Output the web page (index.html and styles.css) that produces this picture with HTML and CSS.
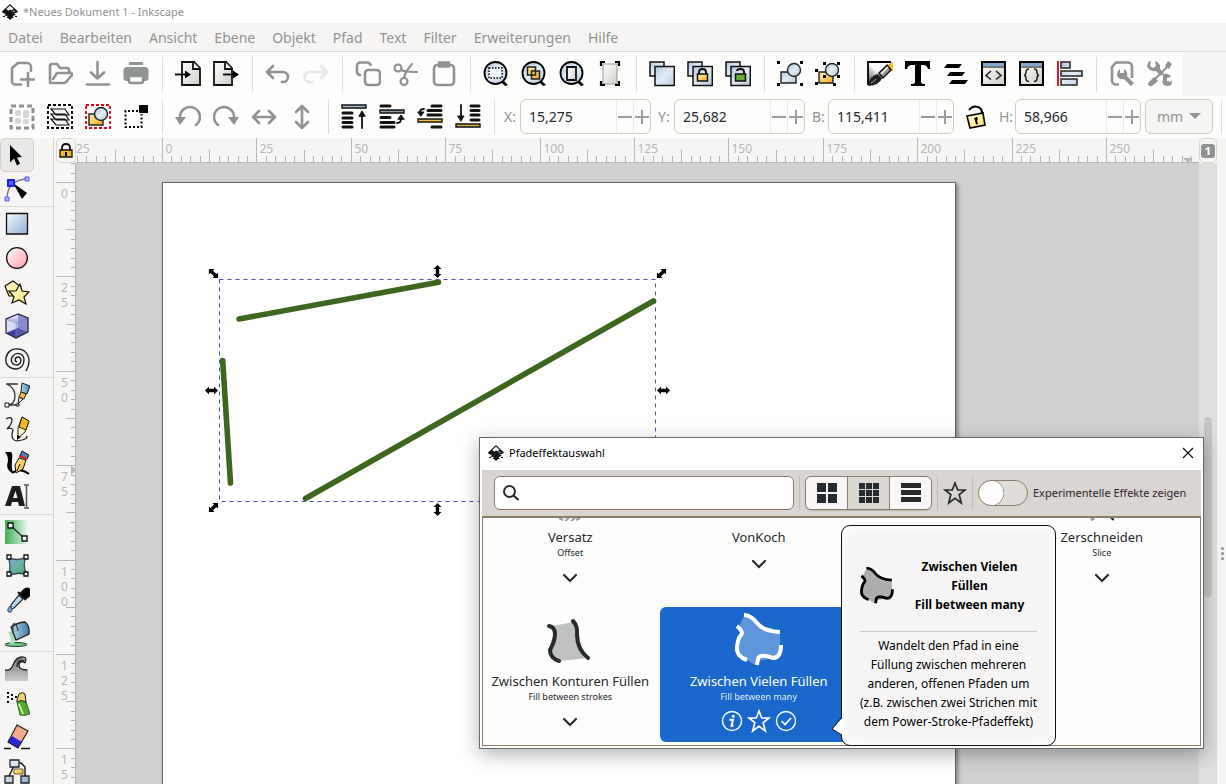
FILE: index.html
```html
<!DOCTYPE html>
<html lang="de">
<head>
<meta charset="utf-8">
<title>*Neues Dokument 1 - Inkscape</title>
<link rel="stylesheet" href="styles.css">
</head>
<body>
<svg class="defs" aria-hidden="true">
  <defs>
    <linearGradient id="blue" x1="0" y1="0" x2="1" y2="1"><stop offset="0" stop-color="#f4f9fd"/><stop offset="1" stop-color="#8fb0d0"/></linearGradient>
    <linearGradient id="steel" x1="0" y1="0" x2="1" y2="1"><stop offset="0" stop-color="#b4c8df"/><stop offset=".5" stop-color="#e2ebf5"/><stop offset="1" stop-color="#b7cae0"/></linearGradient>
    <linearGradient id="pink" x1="0" y1="0" x2="1" y2="1"><stop offset="0" stop-color="#fff"/><stop offset="1" stop-color="#ff9ca8"/></linearGradient>
    <linearGradient id="gold" x1="0" y1="0" x2="1" y2="1"><stop offset="0" stop-color="#fff3b0"/><stop offset="1" stop-color="#f2ac14"/></linearGradient>
    <linearGradient id="cream" x1="0" y1="0" x2="1" y2="1"><stop offset="0" stop-color="#fffef0"/><stop offset="1" stop-color="#fbe35a"/></linearGradient>
    <linearGradient id="green" x1="0" y1="0" x2="1" y2="0"><stop offset="0" stop-color="#3fae57"/><stop offset="1" stop-color="#f4fbf4"/></linearGradient>
    <linearGradient id="teal" x1="0" y1="0" x2="1" y2="1"><stop offset="0" stop-color="#7fa8dc"/><stop offset="1" stop-color="#4fb765"/></linearGradient>
    <linearGradient id="paper" x1="0" y1="0" x2="1" y2="1"><stop offset="0" stop-color="#fff"/><stop offset="1" stop-color="#cfcfc9"/></linearGradient>
    <linearGradient id="ink" x1="0" y1="1" x2=".8" y2="0"><stop offset="0" stop-color="#333"/><stop offset=".6" stop-color="#fff"/></linearGradient>
    <linearGradient id="cyl" x1="0" y1="0" x2="1" y2="0"><stop offset="0" stop-color="#b9dcec"/><stop offset="1" stop-color="#3c79a8"/></linearGradient>
    <linearGradient id="wave" x1="0" y1="0" x2="0" y2="1"><stop offset="0" stop-color="#777"/><stop offset="1" stop-color="#ccc"/></linearGradient>
    <symbol id="logo" viewBox="0 0 16 16">
      <path d="M8 0 L16 7.500 Q15 9 12 9.500 L14 11 L10.500 12 L12 13.500 Q9 14 8 16 Q7 14 4.500 13.500 L6 12 L2 11.500 L4 10 Q0 9 0 7.500Z" fill="#111"/>
      <path d="M8 1.500 L11.500 4.800 L9.500 6.500 L8 5.500 L6.500 6.800 L4.300 5Z" fill="#f2f5f8"/>
      <path d="M11 5.500 L14 8 L10 8.500Z" fill="#5d7896"/><path d="M1 12.500h2M13 12.500h2" stroke="#111"/>
    </symbol>
    <symbol id="lens" viewBox="0 0 26 26">
      <path d="M19 18l6 6-3 1-5-5z" fill="#000"/><circle cx="12.500" cy="12" r="11" fill="url(#steel)" stroke="#000" stroke-width="1.800"/>
    </symbol>
    <symbol id="clone" viewBox="0 0 26 26"><path d="M1 1h14v14H1z" fill="url(#steel)" stroke="#111" stroke-width="1.500"/><path d="M6 5.500h19.300v19H6z" fill="url(#steel)" stroke="#111" stroke-width="1.500"/></symbol>
    <symbol id="chevron" viewBox="0 0 16 10"><path d="M2 2l6 6 6-6" fill="none" stroke="currentColor" stroke-width="2.200" stroke-linecap="round"/></symbol>
    <symbol id="star" viewBox="0 0 24 24"><path d="M12 2l2.700 7H22l-5.800 4.600L18.300 22 12 17.200 5.700 22l2.100-8.400L2 9h7.300z" fill="none" stroke="currentColor" stroke-width="1.700"/></symbol>
    <symbol id="many" viewBox="0 0 48 54">
      <path d="M9 4Q17 4 23 12T45 20V33Q45 45 39 46T23 49L20 53L12 48Q2 44 1 36T5 24T4 14Z" class="many-fill"/>
      <path d="M9 3Q16 3 22 11T45 20M46 33Q46 46 38 46Q24 41 23 47L22 53M12 48Q1 44 2 35T6 23T2 14" fill="none" stroke="currentColor" stroke-width="4"/>
    </symbol>
    <symbol id="resize" viewBox="-8 -8 16 16"><path d="M-6.500 0L-2.500-4V-1.700H2.500V-4L6.500 0L2.500 4V1.700H-2.500V4Z" fill="#000"/></symbol>
  </defs>
</svg>

<header class="titlebar"><svg class="logo"><use href="#logo"/></svg><span>*Neues Dokument 1 - Inkscape</span></header>

<nav class="menubar">
  <button>Datei</button><button>Bearbeiten</button><button>Ansicht</button><button>Ebene</button><button>Objekt</button><button>Pfad</button><button>Text</button><button>Filter</button><button>Erweiterungen</button><button>Hilfe</button>
</nav>

<div class="commands">
<div class="bar bar-main">
  <button class="tool" aria-label="Neu"><svg viewBox="0 0 26 26" class="g"><path d="M12 23.500H6a3 3 0 01-3-3V7l6-5h9a4 4 0 014 4v4M19 12v13M12 18.500h13"/></svg></button>
  <button class="tool" aria-label="Öffnen"><svg viewBox="0 0 26 26" class="g"><path d="M3 22V5a2 2 0 012-2h5l3 4h7a2 2 0 012 2v2M6 18l4-6h13a1.500 1.500 0 011 3l-4 5a4 4 0 01-3 2H5a2 2 0 01-2-2"/></svg></button>
  <button class="tool" aria-label="Speichern"><svg viewBox="0 0 26 26" class="g"><path d="M2 23.500h22M12.500 1v16M6 11.500l6.500 6 6.500-6"/></svg></button>
  <button class="tool" aria-label="Drucken"><svg viewBox="0 0 26 26" class="gf"><path d="M8 1h10a2 2 0 012 3H6a2 2 0 012-3zM4 6h18a3.500 3.500 0 013.500 3.500V17a3 3 0 01-3 3H21v-4H5v4H3.500a3 3 0 01-3-3V9.500A3.500 3.500 0 014 6z"/><path d="M6 15h14v5a2 2 0 01-2 2H8a2 2 0 01-2-2z" fill="#fdfdfb" stroke="#8f9493" stroke-width="2.400"/></svg></button>
  <i class="sep"></i>
  <button class="tool" aria-label="Importieren"><svg viewBox="0 0 26 26"><path d="M7 1h12l6 6v17H7z" fill="url(#paper)" stroke="#111" stroke-width="1.800"/><path d="M18 1v7h7" fill="#fff" stroke="#111" stroke-width="1.800"/><path d="M0 13.500h11" stroke="#000" stroke-width="1.800"/><path d="M10 9.500l6 4-6 4z"/></svg></button>
  <button class="tool" aria-label="Exportieren"><svg viewBox="0 0 26 26"><path d="M1 1h12l6 6v17H1z" fill="url(#paper)" stroke="#111" stroke-width="1.800"/><path d="M12 1v7h7" fill="#fff" stroke="#111" stroke-width="1.800"/><path d="M10 13.500h11" stroke="#000" stroke-width="1.800"/><path d="M20 9.500l6 4-6 4z"/></svg></button>
  <i class="sep"></i>
  <button class="tool" aria-label="Rückgängig"><svg viewBox="0 0 26 26" class="g"><path d="M8 5l-6 6 6 6M2 11h16a5 5 0 010 10h-1"/></svg></button>
  <button class="tool" aria-label="Wiederherstellen"><svg viewBox="0 0 26 26" class="g faint"><path d="M18 5l6 6-6 6M24 11H7a5 5 0 00-1 10h3"/></svg></button>
  <i class="sep"></i>
  <button class="tool" aria-label="Kopieren"><svg viewBox="0 0 26 26" class="g"><path d="M5 14a3.500 3.500 0 01-3-3.500V5a3.500 3.500 0 013.500-3.500H12A3.500 3.500 0 0115.500 4"/><rect x="10" y="9" width="15" height="15" rx="3.500"/></svg></button>
  <button class="tool" aria-label="Ausschneiden"><svg viewBox="0 0 26 26" class="g thin"><circle cx="5" cy="7" r="3.500"/><circle cx="11" cy="20.500" r="3.500"/><path d="M8 9q4 2 16 2M11 17q1-6 8-14"/></svg></button>
  <button class="tool" aria-label="Einfügen"><svg viewBox="0 0 26 26" class="g"><rect x="3" y="4" width="20" height="20" rx="3.500"/><path d="M8 1.500h10v4H8z" fill="#8f9493"/></svg></button>
  <i class="sep"></i>
  <button class="tool" aria-label="Auswahl einpassen"><svg viewBox="0 0 26 26"><use href="#lens"/><path d="M6 7h13v10H6z" fill="#f6f9fc" stroke="#000" stroke-width="1.500" stroke-dasharray="1.500 1.500"/></svg></button>
  <button class="tool" aria-label="Zeichnung einpassen"><svg viewBox="0 0 26 26"><use href="#lens"/><path d="M6.500 6h8v8h-8zM10.500 10h8v8h-8z" fill="url(#gold)" stroke="#222" stroke-width="1.500"/></svg></button>
  <button class="tool" aria-label="Seite einpassen"><svg viewBox="0 0 26 26"><use href="#lens"/><path d="M8 6h9v13H8z" fill="url(#paper)" stroke="#111" stroke-width="1.800"/></svg></button>
  <button class="tool" aria-label="Seite zentrieren"><svg viewBox="0 0 26 26"><path d="M6 3h14v20H6z" fill="url(#paper)" stroke="#999"/><path d="M4 5V1h4M18 1h4v4M22 20v4h-4M8 24H4v-4" fill="none" stroke="#000" stroke-width="2.200"/></svg></button>
  <i class="sep"></i>
  <button class="tool" aria-label="Duplizieren"><svg viewBox="0 0 26 26"><use href="#clone"/></svg></button>
  <button class="tool" aria-label="Klonen"><svg viewBox="0 0 26 26"><use href="#clone"/><path d="M12 14v-3q0-3 3.500-3T19 11v3" fill="none" stroke="#111" stroke-width="2"/><path d="M10.500 13h10v7h-10z" fill="url(#gold)" stroke="#111" stroke-width="1.500"/></svg></button>
  <button class="tool" aria-label="Klon trennen"><svg viewBox="0 0 26 26"><use href="#clone"/><path d="M12 10q0-2 3.500-2T19 11v3" fill="none" stroke="#111" stroke-width="2"/><path d="M10.500 13h10v7h-10z" fill="#64ad32" stroke="#111" stroke-width="1.500"/></svg></button>
  <i class="sep"></i>
  <button class="tool" aria-label="Gruppieren"><svg viewBox="0 0 26 26"><path d="M4 11h15v11H4z" fill="url(#steel)" stroke="#222" stroke-width="1.400"/><circle cx="17" cy="9" r="6.500" fill="url(#steel)" stroke="#222" stroke-width="1.400"/><path d="M0 0h3v3H0zM23 0h3v3h-3zM0 22h3v3H0zM23 22h3v3h-3z"/></svg></button>
  <button class="tool" aria-label="Gruppierung aufheben"><svg viewBox="0 0 26 26"><path d="M4 11h14v11H4z" fill="url(#gold)" stroke="#222" stroke-width="1.400"/><circle cx="17" cy="9" r="6.500" fill="url(#steel)" stroke="#222" stroke-width="1.400"/><path d="M8 1h3v3H8zM22 1h3v3h-3zM0 8h3v3H0zM0 21h3v3H0zM8 14h3v3H8zM22 14h3v3h-3zM18 22h3v3h-3z"/></svg></button>
  <i class="sep"></i>
  <button class="tool" aria-label="Füllung und Kontur"><svg viewBox="0 0 26 26"><path d="M1 1h22L1 24z" fill="url(#ink)"/><path d="M0 1h24M1 0v24" stroke="#000" stroke-width="1.800"/><path d="M20 4l6-3v9l-4 1z" fill="#f3bd27"/><path d="M12 12l8-8 4 5-8 8z" fill="#999" stroke="#111" stroke-width="1.500"/><path d="M14 13l7-7" stroke="#fff" stroke-width="1.500"/><path d="M1 25q2-11 10-12l4 4q-2 7-14 8z" fill="#222"/><path d="M9 18q-2 3-5 4" stroke="#aaa"/></svg></button>
  <button class="tool" aria-label="Text und Schrift"><svg viewBox="0 0 26 26"><path d="M0 0h25v8h-2q-1-4-5-4h-2v17q0 2 4 2v2H6v-2q4 0 4-2V4H7Q3 4 2 8H0z"/></svg></button>
  <button class="tool" aria-label="Ebenen und Objekte"><svg viewBox="0 0 26 26"><path d="M4 3h15l-3 4H1zM7 11h15l-3 4H4zM9 19h16l-3 4H6z"/></svg></button>
  <button class="tool" aria-label="XML-Editor"><svg viewBox="0 0 26 26"><path d="M1 1h23v23H1z" fill="url(#paper)" stroke="#000" stroke-width="2"/><path d="M2 2h21v3H2z" fill="#83a7d0"/><path d="M1 6h23" stroke="#000"/><path d="M10 10l-5 4.500 5 4M15 10l5 4.500-5 4" fill="none" stroke="#222" stroke-width="1.600"/></svg></button>
  <button class="tool" aria-label="Selektoren und CSS"><svg viewBox="0 0 26 26"><path d="M1 1h23v23H1z" fill="url(#paper)" stroke="#000" stroke-width="2"/><path d="M2 2h21v3H2z" fill="#83a7d0"/><path d="M1 6h23" stroke="#000"/><path d="M10 8q-3 0-3 3t-2 3.500q2 0 2 3t3 3M15 8q3 0 3 3t2 3.500q-2 0-2 3t-3 3" fill="none" stroke="#222" stroke-width="1.500"/></svg></button>
  <button class="tool" aria-label="Ausrichten"><svg viewBox="0 0 26 26"><path d="M1 0v25" stroke="#e00016" stroke-width="1.800"/><path d="M4 1h9v6H4zM4 10h21v5H4zM4 18h16v6H4z" fill="url(#steel)" stroke="#222" stroke-width="1.500"/></svg></button>
  <i class="sep"></i>
  <button class="tool" aria-label="Dokumenteinstellungen"><svg viewBox="0 0 26 26"><path d="M10 23.500H7a4 4 0 01-4-4V6l4-4.500h12a4 4 0 014 4V17" fill="none" stroke="#8f9493" stroke-width="2.600"/><path d="M11 8v4h4V8q4 2 3 7l7 7-3 3-7-7q-6 1-7-4 0-4 3-6z" class="gf"/></svg></button>
  <button class="tool" aria-label="Einstellungen"><svg viewBox="0 0 26 26"><path d="M4 22L22 4" stroke="#8f9493" stroke-width="2"/><path d="M21 0l4 3-3 5-4-3zM7 16l4 4-6 5q-4 1-4-3zM4 0l-1 5 3 2 3-2-1-5q6 2 5 8l4 4-3 3-5-5q-7 1-9-5 0-3 3-5zM16 13q6-1 8 3l-4 1v3l4 1 1-2q1 6-5 6-6-1-4-7z" class="gf"/></svg></button>
  <i class="bar-end"></i>
</div>

<div class="bar bar-options">
  <button class="tool" aria-label="Alles auswählen"><svg viewBox="0 0 26 26"><rect x="2" y="2" width="22" height="22" fill="none" stroke="#8f9493" stroke-width="3" stroke-dasharray="5 3"/><g fill="#d5d7d5"><rect x="6" y="6" width="6" height="6" rx="2"/><rect x="14" y="6" width="6" height="8" rx="2"/><rect x="6" y="14" width="6" height="6" rx="2"/><rect x="14" y="15" width="6" height="5" rx="2"/></g></svg></button>
  <button class="tool" aria-label="In allen Ebenen auswählen"><svg viewBox="0 0 26 26"><rect x="1" y="1" width="24" height="23" fill="none" stroke="#000" stroke-width="1.800" stroke-dasharray="3 2"/><path d="M4 15h14l4 6H9zM4 10h14l4 6H9zM4 5h14l4 6H9z" fill="#f5f5f5" stroke="#111" stroke-width="1.200"/></svg></button>
  <button class="tool" aria-label="Auswahl aufheben"><svg viewBox="0 0 26 26"><rect x="1" y="1" width="24" height="23" fill="none" stroke="#e00018" stroke-width="1.800" stroke-dasharray="3 2"/><path d="M4 10h14v11H4z" fill="url(#gold)" stroke="#222" stroke-width="1.400"/><circle cx="16" cy="10" r="6.500" fill="url(#steel)" stroke="#222" stroke-width="1.400"/></svg></button>
  <button class="tool" aria-label="Objekte berühren"><svg viewBox="0 0 26 26"><path d="M15 7H2.500v16h16V10" fill="none" stroke="#000" stroke-width="2" stroke-dasharray="2 2"/><path d="M16 1h9v8h-9z"/></svg></button>
  <i class="sep"></i>
  <button class="tool" aria-label="Gegen Uhrzeigersinn drehen"><svg viewBox="0 0 26 26" class="g"><path d="M21 21A10 10 0 105 14"/><path d="M0 13h11l-6 8z" class="gf"/></svg></button>
  <button class="tool" aria-label="Im Uhrzeigersinn drehen"><svg viewBox="0 0 26 26" class="g"><path d="M5 21a10 10 0 1116-7"/><path d="M15 13h11l-5 8z" class="gf"/></svg></button>
  <button class="tool" aria-label="Horizontal spiegeln"><svg viewBox="0 0 26 26" class="g"><path d="M2 13h22M8 7l-6 6 6 6M18 7l6 6-6 6"/></svg></button>
  <button class="tool" aria-label="Vertikal spiegeln"><svg viewBox="0 0 26 26" class="g"><path d="M13 2v22M7 8l6-6 6 6M7 18l6 6 6-6"/></svg></button>
  <i class="sep"></i>
  <button class="tool" aria-label="Ganz nach oben"><svg viewBox="0 0 26 26" class="stack"><path d="M2 9h9M2 14h9M2 18.500h9M2 23h9"/><path d="M1 1h24v3H1z" fill="#a8bfd6" stroke-width="1.400"/><path d="M21 24V10" stroke-width="1.800"/><path d="M18 12l3-5 3 5z" stroke-width="1"/></svg></button>
  <button class="tool" aria-label="Anheben"><svg viewBox="0 0 26 26" class="stack"><path d="M2 2h9M2 13.500h9M2 18.500h13M2 23h13"/><path d="M1 6h24v3H1z" fill="#8f9aa6" stroke-width="1.400"/><path d="M18 19q4 0 4-4" fill="none" stroke-width="1.800"/><path d="M19 15l3-4 3 4z" stroke-width="1"/></svg></button>
  <button class="tool" aria-label="Absenken"><svg viewBox="0 0 26 26" class="stack"><path d="M15 2h9M11 6.500h13M11 11h13M15 23h9"/><path d="M1 15h24v3H1z" fill="#f5c33d" stroke-width="1.400"/><path d="M7 5q-4 0-4 3" fill="none" stroke-width="1.800"/><path d="M1 8h6l-3 4z" stroke-width="1"/></svg></button>
  <button class="tool" aria-label="Ganz nach unten"><svg viewBox="0 0 26 26" class="stack"><path d="M16 2h8M16 6.500h8M16 11h8M16 16h8"/><path d="M1 20h24v3H1z" fill="#d4b64a" stroke-width="1.400"/><path d="M6 1v12" stroke-width="1.800"/><path d="M3 12h6l-3 5z" stroke-width="1"/></svg></button>
  <i class="sep"></i>
  <div class="field"><label for="fx">X:</label><div class="spin"><input id="fx" value="15,275"><button aria-label="X verringern" class="minus"></button><button aria-label="X erhöhen" class="plus"></button></div></div>
  <div class="field"><label for="fy">Y:</label><div class="spin"><input id="fy" value="25,682"><button aria-label="Y verringern" class="minus"></button><button aria-label="Y erhöhen" class="plus"></button></div></div>
  <div class="field narrow"><label for="fb">B:</label><div class="spin"><input id="fb" value="115,411"><button aria-label="B verringern" class="minus"></button><button aria-label="B erhöhen" class="plus"></button></div></div>
  <button class="ratio" aria-label="Verhältnis sperren"><svg viewBox="0 0 26 26"><path d="M5 6q4-5 9-3t4 8" fill="none" stroke="#000" stroke-width="2"/><path d="M3 12l16-3 2 12-15 3z" fill="url(#cream)" stroke="#000" stroke-width="1.600"/><path d="M10 14l3-1 1 2-1 1 1 4-2 .500-1-4z"/></svg></button>
  <div class="field narrow"><label for="fh">H:</label><div class="spin"><input id="fh" value="58,966"><button aria-label="H verringern" class="minus"></button><button aria-label="H erhöhen" class="plus"></button></div></div>
  <div class="unit"><select aria-label="Einheit"><option>mm</option></select></div>
  <i class="sep last"></i>
</div>
</div>

<main class="workspace">
  <aside class="toolbox">
    <button class="on" aria-label="Auswahl"><svg viewBox="0 0 26 26"><path d="M6 3l12 12-5 .5 3 6-3 2-3-7-4 4z"/></svg></button>
    <button aria-label="Knoten"><svg viewBox="0 0 26 26"><path d="M3 23Q3 4 23 3" fill="none" stroke="#777" stroke-width="1.400"/><path d="M9 7l14 10-5 6z"/><path d="M4 4h6v6H4z" fill="#5263ff" stroke="#1c22e0" stroke-width="2"/><path d="M21 1h4v4h-4zM1 21h4v4H1z" fill="#a9adff" stroke="#5a60f0"/></svg></button>
    <hr>
    <button aria-label="Rechteck"><svg viewBox="0 0 26 26"><path d="M2.500 2.500h21v20.500h-21z" fill="url(#blue)" stroke="#111" stroke-width="1.300"/></svg></button>
    <button aria-label="Ellipse"><svg viewBox="0 0 26 26"><circle cx="13" cy="13" r="10.400" fill="url(#pink)" stroke="#111" stroke-width="1.300"/></svg></button>
    <button aria-label="Stern"><svg viewBox="0 0 26 26"><path d="M9 2l8 6-3 9H5L1 7z" fill="url(#cream)" stroke="#111" stroke-width="1.200"/><path d="M16 5l2 7 7 1-5 5 2 7-7-4-7 3 2-6-5-6h7z" fill="url(#cream)" stroke="#111" stroke-width="1.200"/></svg></button>
    <button aria-label="3D-Quader"><svg viewBox="0 0 26 26"><path d="M14 1L2 6v14l10 5 12-6V5z" fill="#dcdcf8"/><path d="M14 1l10 4v14l-10-4z" fill="#9192d2"/><path d="M2 20l12-5 10 4-12 6z" fill="#3f3fa0"/><path d="M2 6l10 4 12-5M12 10v15l12-6V5z" fill="#7c7dc6" fill-opacity=".35" stroke="#8889c5" stroke-width=".6"/><path d="M14 1L2 6v14l10 5 12-6V5z" fill="none" stroke="#223" stroke-width="1.200"/></svg></button>
    <button aria-label="Spirale"><svg viewBox="0 0 26 26"><path d="M13 15C10 14 11 10 14 10C18 10 18 17 13 18C7 18 6 12 9 9C13 4 20 7 20 13C20 19 16 22 12 22C5 22 1 17 2 11C3 5 8 1 14 2C20 2 25 7 25 14C25 18 24 21 22 24" fill="none" stroke="#222" stroke-width="1.400"/></svg></button>
    <hr>
    <button aria-label="Bézier"><svg viewBox="0 0 26 26"><path d="M2 2h12M3 2q8 4 8 12t-7 9h10" fill="none" stroke="#333" stroke-width="1.300"/><path d="M1 21h4v4H1zM12 22h3v2h-3z" fill="#fff" stroke="#111"/><path d="M18 1l8 3-3 8-6-2z" fill="url(#cyl)" stroke="#222"/><path d="M17 10l5 2-2 5-5-2z" fill="#f5bd39" stroke="#222"/><path d="M15 15l4 2-5 5z" fill="#ddd" stroke="#222"/></svg></button>
    <button aria-label="Freihand"><svg viewBox="0 0 26 26"><path d="M2 3q6-3 6 1T3 13q4-2 6 1-2 6 0 9t9 1 4-4" fill="none" stroke="#222" stroke-width="1.300"/><path d="M18 1l7 4-4 11-7 6v-10z" fill="#fff5b9" stroke="#222"/><path d="M18 1l7 4-3 9-7-3z" fill="#f8b51d" stroke="#222"/><path d="M13 19v5l4-3z"/></svg></button>
    <button aria-label="Kalligrafie"><svg viewBox="0 0 26 26"><path d="M1 2h6q2 1 1 8T9 23h-1Q1 19 4 11 4 5 1 2z"/><path d="M8 23q8-6 17 1" fill="none" stroke="#000" stroke-width="2"/><path d="M18 1l7 4-2 4-7-3z" fill="#4d80b3" stroke="#111"/><path d="M15 6l8 3" stroke="#d22" stroke-width="2"/><path d="M15 8l7 2-3 9-7 4-1-8z" fill="url(#gold)" stroke="#111"/><path d="M13 21l3-7" stroke="#111"/></svg></button>
    <button aria-label="Text"><svg viewBox="0 0 26 26"><path d="M8 2h8l5 20h-6l-1-4H8l-1 4H1zM11.500 7L9 14h4.500z" fill="#1e1e1e" fill-rule="evenodd"/><path d="M20 1h5M20 24h5M22.500 1v23" stroke="#555" stroke-width="1.500"/></svg></button>
    <hr>
    <button aria-label="Farbverlauf"><svg viewBox="0 0 26 26"><path d="M1 1h24v24H1z" fill="url(#green)"/><path d="M7 7l13 12" stroke="#333" stroke-width="1.500"/><path d="M4 4h5v5H4zM18 17h5v5h-5z" fill="#fff" stroke="#111" stroke-width="1.400"/></svg></button>
    <button aria-label="Gitter"><svg viewBox="0 0 26 26"><path d="M4 4q9 5 18 0-4 9 1 18-9-4-19 1 4-10 0-19z" fill="url(#teal)" stroke="#345" stroke-width="1.300"/><path d="M3 2h4v4H3zM20 2h4v4h-4zM3 19h4v4H3zM20 19h4v4h-4z" fill="#fff" stroke="#111" stroke-width="1.300"/></svg></button>
    <button aria-label="Pipette"><svg viewBox="0 0 26 26"><path d="M18 5q4-5 7-3t0 7l-4 3-5-5zM14 5l8 8" stroke="#111" stroke-width="2"/><path d="M15 8l4 4-9 9-3 1v-4z" fill="#b8daf5" stroke="#222" stroke-width="1.200"/><path d="M6 19q-4 5-1 6t3-3z" fill="#73a9d6" stroke="#345"/></svg></button>
    <button aria-label="Farbeimer"><svg viewBox="0 0 26 26"><ellipse cx="12" cy="23.500" rx="11" ry="2" fill="#72c285" stroke="#243"/><path d="M4 11l4-1 4 8q-3 1-1 5H5q4-4-1-12z" fill="#a5e0ba"/><path d="M7 6Q15 1 21 1q5 4 4 12l-13 6z" fill="url(#cyl)" stroke="#222" stroke-width="1.300"/><path d="M9 12V3q3-3 5 7" fill="none" stroke="#222"/></svg></button>
    <hr>
    <button aria-label="Anpassen"><svg viewBox="0 0 26 26"><path d="M1 14q6 1 8-5Q12 1 18 2t3 5q-3-2-5 0-2 5 2 7 4 1 6-1v12H1z" fill="url(#wave)"/><path d="M1 14q6 1 8-5Q12 1 18 1t3 6M21 7q-4-3-6 1-1 6 8 6M13 11q0-8 7-6" fill="none" stroke="#222" stroke-width="1.300"/></svg></button>
    <button aria-label="Spray"><svg viewBox="0 0 26 26"><path d="M13 12q5-4 9 0l4 12q-5 2-10 1z" fill="#55a82c" stroke="#263"/><path d="M15 14l4 10" stroke="#c4ef96" stroke-width="2"/><path d="M13 10l2-6q4-3 6 0l1 8q-5-3-9 0z" fill="#eed06a" stroke="#222"/><path d="M3 2h2v2H3zM7 4h2v2H7zM3 6h2v2H3zM11 6h2v2h-2zM7 8h2v2H7zM3 11h2v2H3z"/></svg></button>
    <button aria-label="Radierer"><svg viewBox="0 0 26 26"><path d="M13 1l11 6-10 17-10-6z" fill="#f3ab8f"/><path d="M8 12l10 6-4 6-10-6z" fill="#2925dd"/><path d="M13 1l11 6-10 17-10-6z" fill="none" stroke="#222" stroke-width="1.200"/><path d="M0 24.500h7M17 24.500h9" stroke="#111" stroke-width="1.500"/></svg></button>
    <button aria-label="Verbinder"><svg viewBox="0 0 26 26"><path d="M10 8L5 18M15 5h2l4 4v9" fill="none" stroke="#111" stroke-width="1.400"/><path d="M6 2h9v7H6zM1 18h8v7H1zM17 18h8v7h-8z" fill="url(#blue)" stroke="#222" stroke-width="1.300"/><path d="M10 11h9v5h-9z" fill="url(#gold)" stroke="#654"/></svg></button>
  </aside>
  <section class="editor">
    <button class="corner" aria-label="Hilfslinien sperren"><svg viewBox="0 0 16 18"><path d="M4 9V6q0-4 4-4t4 4v3" fill="none" stroke="#111" stroke-width="1.800"/><path d="M2 8h12v7H2z" fill="#f4b82c" stroke="#111" stroke-width="1.300"/><path d="M7 10h2v4H7z"/></svg></button>
    <svg class="ruler ruler-h" id="ruler-h"></svg>
    <button class="page-no" aria-label="Seite 1"><b>1</b></button>
    <svg class="ruler ruler-v" id="ruler-v"></svg>
    <div class="canvas">
      <div class="page"></div>
      <svg class="drawing">
        <g transform="translate(-76 -163)">
          <rect x="219.500" y="279.500" width="436" height="222" fill="none" stroke="#4c4ccf" stroke-dasharray="4 4"/>
          <g stroke="#3d671e" stroke-width="5.600" stroke-linecap="round"><path d="M239 319L438.500 282.300"/><path d="M222.700 360.500L230.500 483"/><path d="M305.500 498.500L653.500 301"/></g>
          <use href="#resize" x="-8" y="-8" width="16" height="16" transform="translate(213.500 273.500) rotate(45)"/>
          <use href="#resize" x="-8" y="-8" width="16" height="16" transform="translate(437.500 271.500) rotate(90)"/>
          <use href="#resize" x="-8" y="-8" width="16" height="16" transform="translate(661.500 273.500) rotate(-45)"/>
          <use href="#resize" x="-8" y="-8" width="16" height="16" transform="translate(211.500 390.500)"/>
          <use href="#resize" x="-8" y="-8" width="16" height="16" transform="translate(663.500 390.500)"/>
          <use href="#resize" x="-8" y="-8" width="16" height="16" transform="translate(213.500 507.500) rotate(-45)"/>
          <use href="#resize" x="-8" y="-8" width="16" height="16" transform="translate(437.500 509.500) rotate(90)"/>
        </g>
      </svg>
    </div>
    <div class="scroll"><i></i></div>
  </section>
  <div class="handle"><i></i><i></i><i></i></div>
</main>

<div class="dialog" role="dialog" aria-label="Pfadeffektauswahl">
  <div class="dialog-title"><svg class="logo"><use href="#logo"/></svg><span>Pfadeffektauswahl</span><button aria-label="Schließen"><svg viewBox="0 0 12 12"><path d="M1 1l10 10M11 1L1 11" stroke="#111" stroke-width="1.200"/></svg></button></div>
  <div class="dialog-bar">
    <div class="search"><svg viewBox="0 0 18 18"><circle cx="7.500" cy="7.500" r="5.500" fill="none" stroke="#252b2e" stroke-width="2"/><path d="M11.500 11.500l5 4.500" stroke="#252b2e" stroke-width="2.200"/></svg><input type="search" aria-label="Effekte suchen"></div>
    <i class="line"></i>
    <div class="views">
      <button aria-label="Große Symbole"><svg viewBox="0 0 20 20"><path d="M0 0h9v9H0zM11 0h9v9h-9zM0 11h9v9H0zM11 11h9v9h-9z"/></svg></button>
      <button class="on" aria-label="Kleine Symbole"><svg viewBox="0 0 20 20"><path d="M0 0h6v6H0zM7 0h6v6H7zM14 0h6v6h-6zM0 7h6v6H0zM7 7h6v6H7zM14 7h6v6h-6zM0 14h6v6H0zM7 14h6v6H7zM14 14h6v6h-6z"/></svg></button>
      <button aria-label="Liste"><svg viewBox="0 0 20 20"><path d="M0 0h20v5H0zM0 7h20v5H0zM0 14h20v5H0z"/></svg></button>
    </div>
    <i class="line"></i>
    <button class="fav" aria-label="Favoriten"><svg><use href="#star"/></svg></button>
    <i class="line"></i>
    <label class="switch"><input type="checkbox"><span>Experimentelle Effekte zeigen</span></label>
  </div>
  <div class="effects">
    <article class="effect top"><svg class="peek" viewBox="0 0 24 3"><path d="M1 0l4 2M7 3l4-3M13 3l4-3M18 2l4-2" stroke="#999" stroke-width="2"/></svg><h3>Versatz</h3><p>Offset</p><svg class="chev"><use href="#chevron"/></svg></article>
    <article class="effect top"><h3>VonKoch</h3><svg class="chev"><use href="#chevron"/></svg></article>
    <article class="effect top blank"></article>
    <article class="effect top"><svg class="peek" viewBox="0 0 24 3"><path d="M1 2l3-2" stroke="#999" stroke-width="3"/><path d="M21 0l3 2" stroke="#222" stroke-width="2"/></svg><h3>Zerschneiden</h3><p>Slice</p><svg class="chev"><use href="#chevron"/></svg></article>
    <article class="effect"><svg class="art" viewBox="0 0 48 54"><path d="M6 14L28 10Q33 13 33 23T42 46L14 49Q4 45 4 36T9 23Z" fill="#bfc1c0"/><path d="M3 14Q9 15 9 22T4 38Q4 46 13 49M27 9Q32 14 31 23Q31 37 42 46" fill="none" stroke="#252b2e" stroke-width="4" stroke-linecap="round"/></svg><h3>Zwischen Konturen Füllen</h3><p>Fill between strokes</p><svg class="chev"><use href="#chevron"/></svg></article>
    <article class="effect selected"><svg class="art"><use href="#many"/></svg><h3>Zwischen Vielen Füllen</h3><p>Fill between many</p>
      <div class="actions">
        <button aria-label="Info"><svg viewBox="0 0 24 24"><circle cx="12" cy="12" r="9.500" fill="none" stroke="#fff" stroke-width="1.400"/><circle cx="13.300" cy="7.200" r="1.500" fill="#fff"/><path d="M9.500 10.800h3.500l-1.500 6h2" fill="none" stroke="#fff" stroke-width="1.900"/></svg></button>
        <button aria-label="Favorit"><svg><use href="#star"/></svg></button>
        <button aria-label="Anwenden"><svg viewBox="0 0 24 24"><circle cx="12" cy="12" r="9.500" fill="none" stroke="#fff" stroke-width="1.400"/><path d="M7.500 12l3.500 3.500 6-6.500" fill="none" stroke="#fff" stroke-width="1.700"/></svg></button>
      </div>
    </article>
  </div>
  <div class="tip" role="tooltip">
    <svg class="tail" viewBox="0 0 12 22"><path d="M12 1L1 13L12 20Z" fill="#fff"/><path d="M11 1L1 13L11 19" fill="none" stroke="#111"/></svg>
    <div class="tip-head"><svg><use href="#many"/></svg><strong>Zwischen Vielen Füllen<br>Fill between many</strong></div>
    <p>Wandelt den Pfad in eine Füllung zwischen mehreren anderen, offenen Pfaden um (z.B. zwischen zwei Strichen mit dem Power-Stroke-Pfadeffekt)</p>
  </div>
</div>
<script src="rulers.js"></script>
</body>
</html>
```
FILE: styles.css
```css
* { box-sizing: border-box; }
body { margin: 0; height: 100vh; display: flex; flex-direction: column; overflow: hidden; background: #f6f5f4; font: 14px/20px "Noto Sans", "Open Sans", sans-serif; color: #8f9493; }
button, input, select { font: inherit; color: inherit; margin: 0; padding: 0; border: 0; background: none; outline: 0; }
button { display: flex; align-items: center; justify-content: center; }
svg { display: block; flex: none; }
h3, p, hr { margin: 0; }
.defs { position: absolute; width: 0; height: 0; }
.logo { width: 16px; height: 16px; }

.titlebar { flex: none; height: 23px; display: flex; align-items: center; gap: 5px; padding: 0 2px; background: #fff; font-size: 11px; }
.menubar { flex: none; height: 29px; display: flex; align-items: center; gap: 17px; padding: 2px 8px 0; border-bottom: 1px solid #dcdbd9; }

.commands { flex: none; background: #fdfdfb; }
.bar { display: flex; align-items: center; padding-left: 3px; }
.bar-main { height: 44px; }
.bar-options { height: 42px; padding-bottom: 1px; }
.tool { flex: none; width: 38px; height: 38px; }
.tool svg { width: 26px; height: 26px; }
.sep { flex: none; width: 14px; height: 35px; background: linear-gradient(#dfdedc, #dfdedc) center / 1px 100% no-repeat; }
.sep.last { width: 16px; }
.bar-end { flex: 1; height: 44px; margin-left: 4px; background: #f6f5f4; }
.g { fill: none; stroke: #8f9493; stroke-width: 2.6px; stroke-linecap: round; stroke-linejoin: round; }
.g.thin { stroke-width: 2.2px; }
.faint { opacity: .2; }
.gf { fill: #8f9493; stroke: none; }
.stack { fill: #111; stroke: #111; stroke-width: 3px; stroke-linecap: round; }

.field { flex: none; display: flex; align-items: center; gap: 4px; margin-right: 7px; }
.field label { width: 12px; }
.field:first-of-type { margin-left: 3px; }
.spin { display: flex; width: 131px; height: 35px; border: 1px solid #cfccc6; border-radius: 6px; overflow: hidden; }
.narrow .spin { width: 126px; }
.spin input { flex: 1; min-width: 0; padding-left: 8px; color: #252b2e; }
.spin button { width: 17px; border-left: 1px solid #eceae7; background: linear-gradient(#999c9b, #999c9b) center / 14px 2px no-repeat; }
.spin .plus { background: linear-gradient(#999c9b, #999c9b) center / 14px 2px no-repeat, linear-gradient(#999c9b, #999c9b) center / 2px 14px no-repeat; }
.ratio { flex: none; width: 26px; margin: 0 9px 0 3px; }
.ratio svg { width: 26px; height: 26px; }
.unit { flex: none; position: relative; height: 35px; width: 68px; margin-left: -3px; border: 1px solid #cfccc6; border-radius: 6px; background: #f6f5f4; }
.unit select { appearance: none; width: 100%; height: 100%; padding-left: 11px; }
.unit::after { content: ""; position: absolute; right: 11px; top: 13px; border: 6px solid transparent; border-top-color: #8f9493; border-bottom: 0; pointer-events: none; }

.workspace { flex: 1; min-height: 0; display: flex; }
.toolbox { flex: none; width: 54px; border-right: 1px solid #d4d2cf; overflow: hidden; }
.toolbox button { width: 34px; height: 34px; }
.toolbox button.on { background: #e9e8e6; border: 1px solid #d5d0ca; border-radius: 5px; }
.toolbox svg { width: 26px; height: 26px; }
.toolbox hr { height: 1px; border: 0; background: #dbdad8; }
.editor { flex: 1; min-width: 0; margin-left: 2px; display: grid; grid-template: 25px minmax(0, 1fr) / 20px minmax(0, 1fr) 18px; }
.corner { border: 1px solid #dcd6d1; border-radius: 5px; }
.corner svg { width: 16px; height: 18px; }
.ruler { width: 100%; height: 100%; overflow: hidden; font-size: 12px; fill: #b4b7b6; }
.ruler path { stroke: #b4b7b5; fill: none; }
.ruler-h { border-bottom: 1px solid #b4b7b5; }
.ruler-v { border-right: 1px solid #b4b7b5; }
.ruler .marker { fill: #b4b7b5; stroke: none; }
.page-no { border: 1px solid #dcd6d1; border-radius: 5px; }
.page-no b { width: 14px; height: 14px; border-radius: 3px; background: #8f9493; color: #fff; font-size: 11px; line-height: 14px; }
.canvas { position: relative; overflow: hidden; background: #d1d1d1; }
.page { position: absolute; left: 86px; top: 19px; width: 794px; height: 1123px; background: #fff; border: 1px solid #666; box-shadow: 2px 2px 4px rgba(0, 0, 0, .4); }
.drawing { position: absolute; inset: 0; width: 100%; height: 100%; }
.scroll { padding: 254px 5px 0; background: #dededd; }
.scroll i { display: block; height: 180px; border-radius: 4px; background: #c6c6c5; }
.handle { flex: none; width: 9px; display: flex; flex-direction: column; justify-content: center; align-items: center; gap: 2px; padding: 184px 0 0 1px; }
.handle i { width: 3px; height: 3px; border-radius: 2px; background: #8f9493; }

.dialog { position: absolute; left: 479px; top: 437px; width: 725px; height: 312px; display: flex; flex-direction: column; padding: 0 2px 2px; background: #fff; border: 1px solid #68686a; box-shadow: 0 5px 18px rgba(0, 0, 0, .3); color: #252b2e; }
.dialog-title { flex: none; height: 32px; display: flex; align-items: center; gap: 5px; padding: 0 7px 3px 6px; color: #000; font-size: 11px; }
.dialog-title button { margin-left: auto; }
.dialog-title button svg { width: 12px; height: 12px; }
.dialog-bar { flex: none; height: 48px; display: flex; align-items: center; padding: 0 12px; background: #d9d5d0; border-bottom: 2px solid #8b7c6d; }
.search { flex: none; width: 300px; height: 34px; display: flex; align-items: center; gap: 6px; padding: 0 7px; background: #fff; border: 1px solid #8b7c6d; border-radius: 6px; }
.search svg { width: 18px; height: 18px; }
.search input { flex: 1; min-width: 0; }
.line { flex: none; width: 1px; height: 34px; margin: 0 5px; background: #c3bdb6; }
.views { flex: none; display: flex; height: 34px; border: 1px solid #8b7c6d; border-radius: 6px; overflow: hidden; background: #f8f7f5; box-shadow: 0 1px 1px rgba(0, 0, 0, .15); }
.views button { width: 41px; }
.views button + button { width: 42px; border-left: 1px solid #8b7c6d; }
.views .on { background: #dbd8d4; }
.views svg { width: 20px; height: 20px; fill: #252b2e; }
.fav svg { width: 24px; height: 24px; }
.switch { flex: none; display: flex; align-items: center; gap: 5px; font-size: 11px; white-space: nowrap; color: #30222e; }
.switch input { appearance: none; width: 50px; height: 26px; border: 1px solid #8b7c6d; border-radius: 13px; background: radial-gradient(circle at 12px 12px, #fff 12px, #8b7c6d 13px, #e0ddd9 13px); }
.effects { flex: 1; min-height: 0; display: grid; grid-template: 89px 1fr / 177fr 199fr 163fr 180fr; border: 1px solid #8b7c6d; border-top: 0; background: #fdfdfb; padding-bottom: 3px; }
.effect { display: flex; flex-direction: column; align-items: center; }
.effect h3 { font-weight: 400; font-size: 13px; line-height: 18px; white-space: nowrap; }
.effect p { font-size: 9px; line-height: 14px; }
.effect.top { position: relative; padding-top: 10px; }
.effect:nth-child(1), .effect:nth-child(5) { padding-right: 2px; }
.effect:nth-child(4) { padding-right: 17px; }
.peek { position: absolute; top: 0; width: 24px; height: 3px; }
.chev { width: 16px; height: 10px; margin-top: 13px; }
.art { width: 48px; height: 54px; margin: 5px 0 6px; }
.selected { background: #1b68cc; color: #fff; border-radius: 6px; }
.selected p { opacity: .9; }
.many-fill { fill: currentColor; opacity: .3; }
.actions { display: flex; gap: 3px; padding-top: 5px; }
.actions svg { width: 24px; height: 24px; }

.tip { position: absolute; left: 361px; top: 87px; width: 215px; min-height: 221px; padding: 31px 16px 12px; background: #f6f5f4; border: 1px solid #111; border-radius: 9px; box-shadow: inset 0 0 8px 3px #fff; font-size: 12px; line-height: 19px; color: #000; text-align: center; text-shadow: 0 0 3px #fff, 0 0 5px #fff; }
.tip-head { display: flex; align-items: center; gap: 8px; height: 75px; margin: 0 2px 4px; padding-bottom: 18px; border-bottom: 1px solid #c9c8c5; }
.tip-head svg { width: 34px; height: 38px; filter: drop-shadow(0 0 2px #fff); }
.tip-head strong { flex: 1; padding: 0 8px; }
.tail { position: absolute; left: -11px; top: 190px; width: 12px; height: 22px; }
```
FILE: rulers.js
```js
const NS = "http://www.w3.org/2000/svg";
const STEP = 9.44;

function ticks(id, from, origin, full, vertical) {
  const svg = document.getElementById(id);
  const box = svg.getBoundingClientRect();
  const limit = vertical ? box.height : box.width;
  let d = "";
  for (let i = from; origin + i * STEP < limit; i++) {
    const p = Math.round(origin + i * STEP) + 0.5;
    const len = i % 10 === 0 ? full : i % 5 === 0 ? (vertical ? 10 : 13) : (vertical ? 5 : 7);
    d += vertical ? `M${full} ${p}h${-len}` : `M${p} ${full}v${-len}`;
    if (i % 10 === 0) {
      const label = String(Math.abs(i / 10 * 25));
      if (vertical) {
        [...label].forEach((c, n) => {
          const y = p + 15 + n * 15;
          if (y < limit) text(svg, 5, y, c);
        });
      } else if (p + 24 < limit) {
        text(svg, Math.max(p + 3, 0), 15, label);
      }
    }
  }
  const path = document.createElementNS(NS, "path");
  path.setAttribute("d", d);
  svg.append(path);
}

function text(svg, x, y, value) {
  const t = document.createElementNS(NS, "text");
  t.setAttribute("x", x);
  t.setAttribute("y", y);
  t.textContent = value;
  svg.append(t);
}

function marker(id, d) {
  const path = document.createElementNS(NS, "path");
  path.setAttribute("class", "marker");
  path.setAttribute("d", d);
  document.getElementById(id).append(path);
}

ticks("ruler-h", -10, 86, 25, false);
ticks("ruler-v", -2, 19, 20, true);
marker("ruler-h", "M1107 20h10l-5 5z");
marker("ruler-v", "M15 302v10l5-5z");
```
